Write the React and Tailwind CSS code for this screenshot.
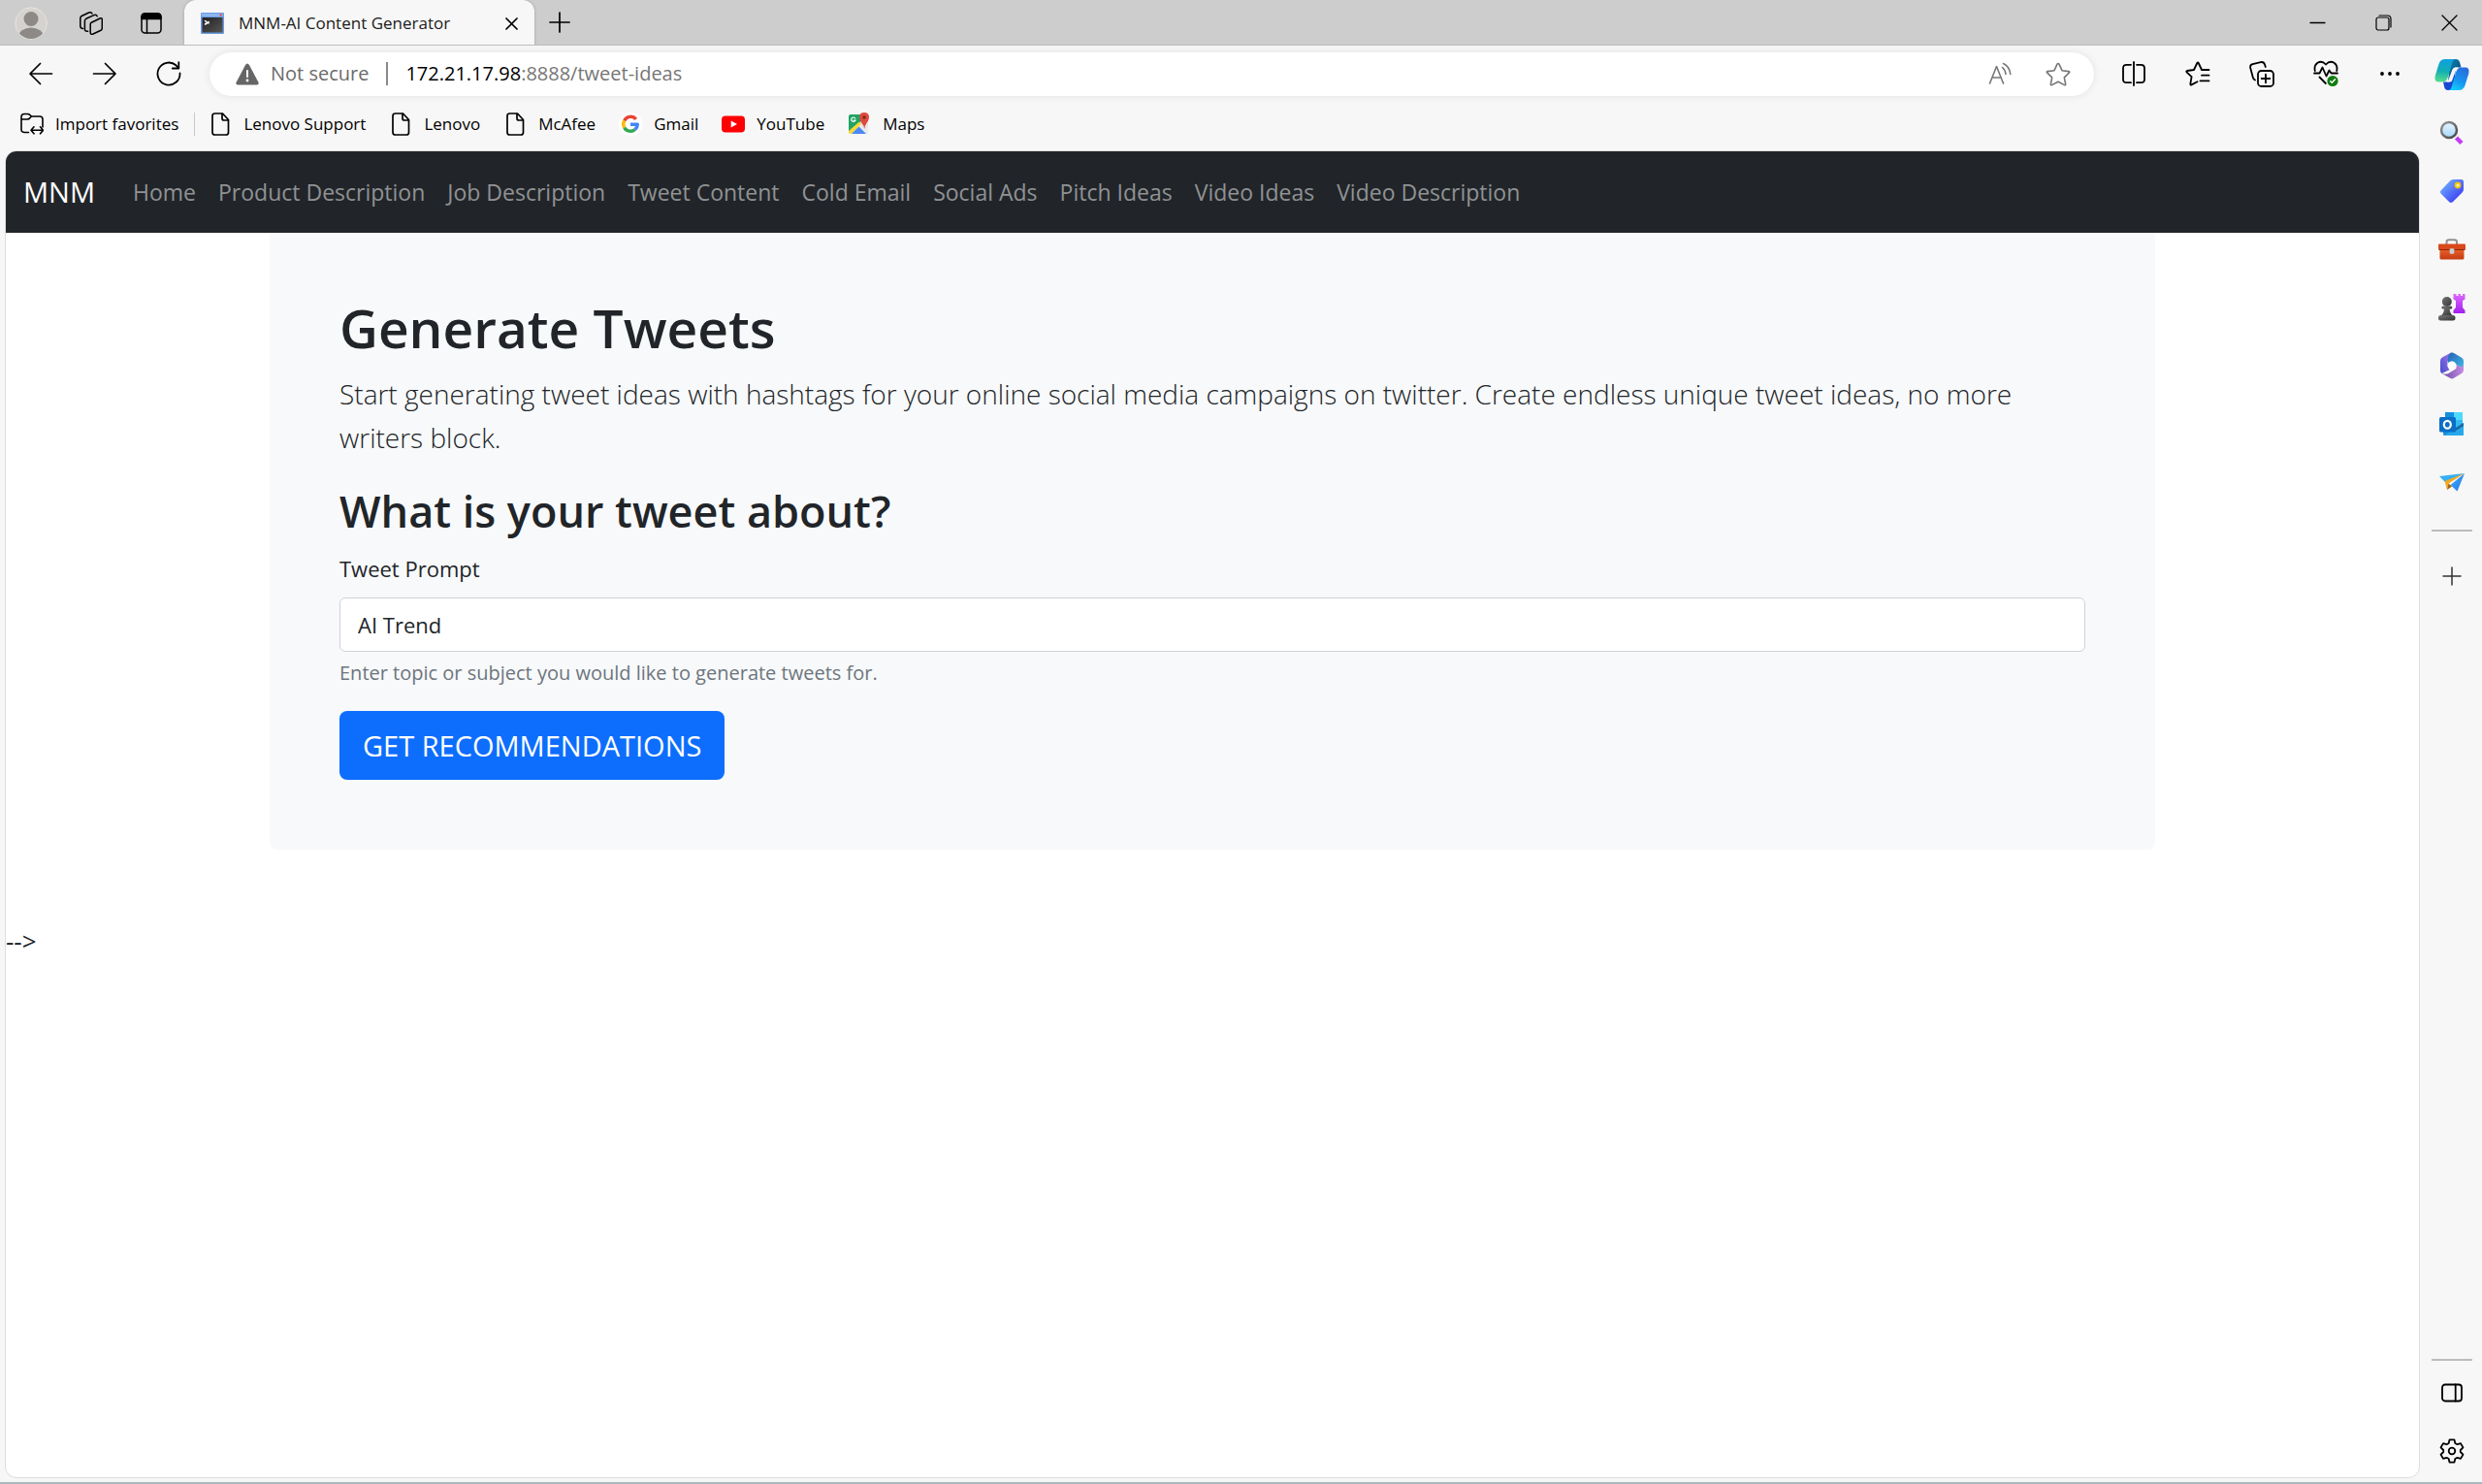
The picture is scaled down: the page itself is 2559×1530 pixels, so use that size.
import React from "react";

function Svg({ size = 24, w, h, sw = 1.5, children, className = "" }) {
  const width = w || size;
  const height = h || size;
  return (
    <svg
      width={width}
      height={height}
      viewBox={`0 0 ${width} ${height}`}
      fill="none"
      stroke="currentColor"
      strokeWidth={sw}
      strokeLinecap="round"
      strokeLinejoin="round"
      className={`shrink-0 ${className}`}
      aria-hidden="true"
    >
      {children}
    </svg>
  );
}

const Avatar = () => (
  <Svg size={34} sw={1}>
    <defs><clipPath id="av"><circle cx="17" cy="17" r="16" /></clipPath></defs>
    <circle cx="17" cy="17" r="16.2" fill="#d5d3cf" stroke="#e6e4e0" />
    <g clipPath="url(#av)" fill="#8c8986" stroke="none">
      <circle cx="17" cy="12.5" r="7.5" />
      <ellipse cx="17" cy="31" rx="13" ry="9.5" />
    </g>
  </Svg>
);
const Workspaces = () => (
  <Svg>
    <path d="M12.3 11.2 L21 7 Q23.3 6.2 23.3 8.5 V17 Q23.3 18.6 22 19.3 L14 23 Q11.2 24 11.2 21.5 V13 Q11.2 11.8 12.3 11.2Z" />
    <path d="M8.7 20.2 Q5.4 20.8 5.4 18 V9.4 Q5.4 8 6.8 7.3 L14.8 3.6 Q17.3 2.7 18.2 4.7" />
    <path d="M3.6 17.5 Q.8 17.5 .8 14.8 V6.8 Q.8 5.2 2.2 4.5 L9.6 1 Q12.2 .2 13 2" />
  </Svg>
);
const VerticalTabs = () => (
  <Svg w={22} h={22}>
    <rect x="1" y="1" width="20" height="20" rx="3.5" />
    <path d="M1 6.5 V4.500 Q1 1 4.500 1 H17.500 Q21 1 21 4.500 V6.500Z" fill="currentColor" />
    <path d="M6.500 6 V21" />
  </Svg>
);
const TerminalIcon = () => (
  <Svg w={24} h={22}>
    <defs><linearGradient id="tm" x1="0" y1="0" x2="1" y2="1"><stop stopColor="#222" /><stop offset="1" stopColor="#555" /></linearGradient></defs>
    <rect width="24" height="22" rx="1" fill="#6b9be0" stroke="none" />
    <rect x="1" y="1" width="22" height="3" fill="#8db6ee" stroke="none" />
    <rect x="19.500" y="1.500" width="2.500" height="2" fill="#e0574f" stroke="none" />
    <rect x="1.500" y="5" width="21" height="15.500" fill="url(#tm)" stroke="none" />
    <path d="M4.500 8.500 L7 10.500 L4.500 12" stroke="#fff" />
    <path d="M8 9.500 V11" stroke="#fff" />
  </Svg>
);
const X = ({ s = 13, sw = 1.7 }) => (
  <Svg size={s} sw={sw}><path d={`M1 1 L${s - 1} ${s - 1} M${s - 1} 1 L1 ${s - 1}`} /></Svg>
);
const Plus = ({ s = 22, sw = 1.7 }) => (
  <Svg size={s} sw={sw}><path d={`M${s / 2} 1 V${s - 1} M1 ${s / 2} H${s - 1}`} /></Svg>
);
const Back = () => <Svg size={26} sw={1.7}><path d="M12.500 2.500 L2 13 L12.500 23.500 M2.500 13 H24.500" /></Svg>;
const Forward = () => <Svg size={26} sw={1.7}><path d="M13.500 2.500 L24 13 L13.500 23.500 M23.500 13 H1.500" /></Svg>;
const Refresh = () => (
  <Svg size={26} sw={1.8}><path d="M24.500 12.500 A11.500 11.500 0 1 1 20.500 4.300 L23 7 M23.300 1.200 V7.500 H16.800" /></Svg>
);
const Warning = () => (
  <Svg w={24} h={23}>
    <path d="M10 2 Q12 -1 14 2 L23.500 20 Q24.300 22.500 21.800 22.500 H2.200 Q-.3 22.500 .5 20Z" fill="#666" stroke="none" />
    <path d="M12 8 V14" stroke="#fff" strokeWidth="2" />
    <circle cx="12" cy="18" r="1.400" fill="#fff" stroke="none" />
  </Svg>
);
const ReadAloud = () => (
  <Svg w={24} h={24} sw={1.6}>
    <path d="M1.500 22 L8.500 4.500 L15.500 22 M4 16 H13" />
    <path d="M14.500 5.500 Q17.500 8 18 12.500 M15.500 1.500 Q22 4.500 22.800 12.500" />
  </Svg>
);
const Star = () => (
  <Svg w={26} h={25} sw={1.6}>
    <path d="M13 1.500 Q13.700 1.500 14 2.200 L17 8.700 L24 9.600 Q25.200 9.900 24.400 10.900 L19.300 15.800 L20.700 22.800 Q20.700 24.200 19.500 23.600 L13 20.200 L6.500 23.600 Q5.300 24.200 5.300 22.800 L6.700 15.800 L1.600 10.900 Q.8 9.900 2 9.600 L9 8.700 L12 2.200 Q12.300 1.500 13 1.500Z" />
  </Svg>
);
const Split = () => (
  <Svg w={24} h={26} sw={1.8}>
    <path d="M9 3.800 H4.500 Q1 3.800 1 7.300 V18.700 Q1 22.200 4.500 22.200 H9 M15 3.800 H19.500 Q23 3.800 23 7.300 V18.700 Q23 22.200 19.500 22.200 H15 M12 1 V25" />
  </Svg>
);
const Favorites = () => (
  <Svg w={26} h={26} sw={1.8}>
    <path d="M24.500 9 H17 L13.700 2 Q13 .8 12.300 2 L9 9 L1.900 10 Q.7 10.300 1.500 11.300 L6.600 16.200 L5.300 23.600 Q5.300 25 6.500 24.400 L12.500 21.200" />
    <path d="M17 14.700 H24.500 M15.500 20.400 H24.500" />
  </Svg>
);
const Collections = () => (
  <Svg w={26} h={27} sw={1.8}>
    <rect x="9" y="10" width="16" height="16" rx="3.500" />
    <path d="M17 13.700 V22.300 M12.700 18 H21.300" />
    <path d="M6 19.500 Q4.200 18.700 3.800 16.800 L1.200 7 Q.6 4 3.500 3.200 L11.800 1.100 Q15 .4 16 3.500 L16.800 6" />
  </Svg>
);
const Health = () => (
  <Svg w={26} h={28} sw={1.8}>
    <path d="M1.800 11 Q.5 5.500 4.500 2.700 Q9 .2 13 4.500 Q17 .2 21.500 2.700 Q25.500 5.500 24.200 11 M1 13.500 H6.500 L9.500 7.500 L13.500 16.500 L16.500 10.500 L18.500 13.500 H25 M6.500 17.500 L12.800 24" />
    <circle cx="20" cy="21.500" r="5.600" fill="#107c10" stroke="none" />
    <path d="M17.700 21.700 L19.300 23.200 L22.500 19.700" stroke="#fff" strokeWidth="1.400" />
  </Svg>
);
const Dots = () => (
  <Svg w={22} h={6}><g fill="currentColor" stroke="none"><circle cx="3" cy="3" r="1.900" /><circle cx="11" cy="3" r="1.900" /><circle cx="19" cy="3" r="1.900" /></g></Svg>
);
const Copilot = () => (
  <Svg w={36} h={34}>
    <defs>
      <linearGradient id="c1" x1=".3" y1="0" x2=".2" y2="1"><stop stopColor="#0fa0e0" /><stop offset=".5" stopColor="#12aeb5" /><stop offset="1" stopColor="#5ade8b" /></linearGradient>
      <linearGradient id="c2" x1=".9" y1="0" x2=".4" y2="1"><stop stopColor="#2a67d8" /><stop offset=".6" stopColor="#1793ef" /><stop offset="1" stopColor="#14c8fa" /></linearGradient>
      <linearGradient id="c3" x1="0" y1="0" x2="1" y2="1"><stop stopColor="#0a83b5" /><stop offset="1" stopColor="#06456f" /></linearGradient>
    </defs>
    <g stroke="none">
      <path d="M17 1 H22 Q25 1 26 4 L27.500 9.500 H22 Q19 9.500 18 13 L14 24 L16 4Z" fill="url(#c3)" />
      <path d="M19 33 H14 Q11 33 10.200 30 L9 24.500 H14.500 Q17 24.500 18 21 L22 10 L20 30Z" fill="#1748d2" />
      <path d="M11 1 H22 Q19.500 1 18.500 4 L14 19 Q12.500 24.500 8.500 24.500 H4 Q-.5 24.500 .8 18 L4.500 6 Q6 1 11 1Z" fill="url(#c1)" />
      <path d="M25 33 H14 Q16.500 33 17.500 30 L22 15 Q23.500 9.500 27.500 9.500 H32 Q36.500 9.500 35.200 16 L31.500 28 Q30 33 25 33Z" fill="url(#c2)" />
      <path d="M18.500 12.500 Q19.500 9.500 22 9.500 H24 Q22.500 10.500 21.800 13 L18 23.500 Q17.500 24.500 15.500 24.500 H13 Q14.300 23.500 15 21.500Z" fill="#f7f7f7" />
    </g>
  </Svg>
);
const Search = () => (
  <Svg w={26} h={26}>
    <defs><linearGradient id="s1" x1="0" y1="0" x2="0" y2="1"><stop stopColor="#e9f5ff" /><stop offset="1" stopColor="#a5d8fb" /></linearGradient>
      <linearGradient id="s2" x1="0" y1="0" x2="1" y2="1"><stop stopColor="#999" /><stop offset="1" stopColor="#444" /></linearGradient></defs>
    <path d="M17.500 18 L23 23.500" stroke="#c23cf5" strokeWidth="4.500" strokeLinecap="butt" />
    <circle cx="10" cy="10" r="8" fill="url(#s1)" stroke="url(#s2)" strokeWidth="2.500" />
  </Svg>
);
const Tag = () => (
  <Svg w={26} h={26}>
    <defs><linearGradient id="t1" x1="0" y1="0" x2="1" y2="1"><stop offset=".1" stopColor="#6fb0ff" /><stop offset=".9" stopColor="#3a35f2" /></linearGradient></defs>
    <path d="M14 1 H22.500 Q25 1 25 3.500 V11 Q25 13 23.500 14.500 L14 24 Q12 26 10 24 L2 16 Q0 14 2 12 L11 2.500 Q12.500 1 14 1Z" fill="url(#t1)" stroke="none" />
    <circle cx="19" cy="7" r="2.500" fill="#fff3b0" stroke="#f2c200" strokeWidth="1.800" />
  </Svg>
);
const Toolbox = () => (
  <Svg w={28} h={22}>
    <defs><linearGradient id="b1" x1="0" y1="0" x2="0" y2="1"><stop stopColor="#f0692e" /><stop offset="1" stopColor="#c43b12" /></linearGradient></defs>
    <path d="M8.500 6 V3.500 Q8.500 1.200 11 1.200 H16.500 Q19 1.200 19 3.500 V6" stroke="#909090" strokeWidth="2" />
    <rect x="1.500" y="9" width="25" height="12.500" rx="1.500" fill="url(#b1)" stroke="none" />
    <rect x="0" y="5.500" width="28" height="6" rx="1" fill="#d9491b" stroke="none" />
    <path d="M1 11.500 H27" stroke="#8e260a" strokeWidth="1" />
    <rect x="11.700" y="10.200" width="4.600" height="5.500" rx="1" fill="#c9ced2" stroke="none" />
  </Svg>
);
const Chess = () => (
  <Svg w={28} h={28}>
    <defs><linearGradient id="p1" x1="0" y1="0" x2="0" y2="1"><stop stopColor="#dd6bfa" /><stop offset="1" stopColor="#a31ef0" /></linearGradient>
      <linearGradient id="p2" x1="0" y1="0" x2="1" y2="1"><stop stopColor="#777" /><stop offset="1" stopColor="#333" /></linearGradient></defs>
    <g stroke="none">
      <path d="M15.500 0 H18.500 V2 H20.500 V0 H23 V2 H25 V0 H27.500 V5.500 L25 7 V14 L27.500 17 V20 H15.500 V17 L18 14 V7 L15.500 5.500Z" fill="url(#p1)" />
      <g fill="url(#p2)">
        <circle cx="8.800" cy="8" r="5" />
        <rect x="3.300" y="12.500" width="11" height="3" rx="1.500" />
        <path d="M6 14 H11.600 Q11.600 20 14.500 22 H3 Q6 20 6 14Z" />
        <rect x="0" y="22" width="17.500" height="5.500" rx="2.500" />
      </g>
    </g>
  </Svg>
);
const M365 = () => (
  <Svg w={26} h={28}>
    <defs>
      <linearGradient id="m1" x1="0" y1="1" x2="1" y2="0"><stop stopColor="#4b4bd0" /><stop offset="1" stopColor="#a27be8" /></linearGradient>
      <linearGradient id="m2" x1="0" y1="0" x2="1" y2="1"><stop stopColor="#2560b4" /><stop offset="1" stopColor="#3fbce8" /></linearGradient>
      <linearGradient id="m3" x1="0" y1="0" x2="1" y2="0"><stop stopColor="#6a4aa8" /><stop offset="1" stopColor="#c58be0" /></linearGradient>
    </defs>
    <g stroke="none">
      <path d="M13 0 L3 5.500 Q1 6.700 1 9 V19 Q1 21 2.500 22 L11 18 L8.500 14 V10Z" fill="url(#m1)" />
      <path d="M11.500 1 Q13 0 15 1 L23 5.800 Q25 7 25 9 V17 L17.500 13 L13 9.500 L9 11 V6 Q9 2.500 11.500 1Z" fill="url(#m2)" />
      <path d="M25 11 V18.500 Q25 20.700 23 22 L15 26.800 Q13 28 11 26.800 L2.500 22 Q8 24 11 21 L17.500 17 V13 L22 15.500 Q25 15 25 11Z" fill="url(#m3)" />
      <circle cx="13" cy="14" r="4.500" fill="#fff" />
    </g>
  </Svg>
);
const Outlook = () => (
  <Svg w={26} h={26}>
    <g stroke="none">
      <rect x="6" y="1" width="18" height="16" rx="1.500" fill="#35b8f1" />
      <rect x="6" y="1" width="9" height="8" fill="#1490df" />
      <rect x="15" y="1" width="9" height="8" fill="#50d9ff" />
      <path d="M4 12 L15 18 L25 12 V23.500 Q25 25 23.500 25 H5.500 Q4 25 4 23.500Z" fill="#1a8fdc" />
      <path d="M25 12 L6 24.500 Q6.500 25 8 25 H23.500 Q25 25 25 23.500Z" fill="#28a8ea" />
      <path d="M25 12 L15 18.500 L17.500 19.800 L25 15Z" fill="#123b6d" opacity=".6" />
      <rect x="0" y="6" width="17" height="15.500" rx="1.500" fill="#0a6fc7" />
    </g>
    <ellipse cx="8.300" cy="13.700" rx="3.500" ry="3.900" stroke="#fff" strokeWidth="2.200" />
  </Svg>
);
const Plane = () => (
  <Svg w={26} h={20}>
    <defs><linearGradient id="f1" x1="0" y1="0" x2="1" y2="1"><stop stopColor="#38b6f5" /><stop offset="1" stopColor="#2a6df0" /></linearGradient></defs>
    <g stroke="none">
      <path d="M0 4 L26 1 L6 10Z" fill="#35b0f3" />
      <path d="M26 1 L11.500 13 L18.500 19.500Z" fill="url(#f1)" />
      <path d="M26 1 L5.500 9 L8 18 L9.500 11.500Z" fill="#f5a81c" />
      <path d="M8 18 L9.500 11.500 L13 14.500Z" fill="#a8620a" />
    </g>
  </Svg>
);
const Panel = () => (
  <Svg w={22} h={20} sw={1.8}><rect x="1" y="1.500" width="20" height="17" rx="3" /><path d="M14.700 1.500 V18.500" /></Svg>
);
const Gear = () => (
  <Svg w={26} h={26} sw={1.8}>
    <path d="M10.500 1.400 H15.500 L16.300 5 L18.500 6.200 L22 5.100 L24.500 9.400 L21.800 12 V14 L24.500 16.600 L22 20.900 L18.500 19.800 L16.300 21 L15.500 24.600 H10.500 L9.700 21 L7.500 19.800 L4 20.900 L1.500 16.600 L4.200 14 V12 L1.500 9.400 L4 5.100 L7.500 6.200 L9.700 5Z" />
    <circle cx="13" cy="13" r="3.300" />
  </Svg>
);
const ImportFolder = () => (
  <Svg w={24} h={24} sw={1.6}>
    <path d="M8.500 20.500 H4.500 Q1 20.500 1 17.500 V4.500 Q1 1.500 4 1.500 H7.500 Q9 1.500 10 2.700 L11.500 4 H20 Q23 4 23 7 V15 M1 7 H7 Q9 7 10 5.500 L11.500 4" />
    <path d="M14 14.800 L11 18.300 L14 21.800 M20.500 14.800 L23.500 18.300 L20.500 21.800 M11.500 18.300 H23" />
  </Svg>
);
const FileIcon = () => (
  <Svg w={24} h={24} sw={1.7}>
    <path d="M6.500 1 H14.500 L20.500 7.500 V20.500 Q20.500 23 18 23 H6.500 Q4 23 4 20.500 V3.500 Q4 1 6.500 1Z M14 1.500 V6 Q14 8 16 8 H20" />
  </Svg>
);
const Google = () => (
  <Svg w={24} h={24}>
    <circle cx="12" cy="12" r="12" fill="#fff" stroke="none" />
    <g strokeWidth="3.400" strokeLinecap="butt">
      <path d="M17.800 6.800 A7.300 7.300 0 0 0 5.700 8.400" stroke="#ea4335" />
      <path d="M5.700 8.400 A7.300 7.300 0 0 0 5.700 15.600" stroke="#fbbc05" />
      <path d="M5.700 15.600 A7.300 7.300 0 0 0 16.800 17.500" stroke="#34a853" />
      <path d="M16.800 17.500 A7.300 7.300 0 0 0 19.300 12.200 H12" stroke="#4285f4" />
    </g>
  </Svg>
);
const YouTube = () => (
  <Svg w={24} h={24}>
    <rect x="0" y="3.500" width="24" height="17" rx="4" fill="#f00" stroke="none" />
    <path d="M9.700 8.500 L16 12 L9.700 15.500Z" fill="#fff" stroke="none" />
  </Svg>
);
const Maps = () => (
  <Svg w={24} h={24}>
    <g stroke="none">
      <path d="M1 4 Q1 2 3 2 H21 V20 Q21 22 19 22 H3 Q1 22 1 20Z" fill="#e8eaed" />
      <path d="M1 4 Q1 2 3 2 H17 L12 12 L1 21Z" fill="#1fa463" />
      <path d="M1 19 L12 9.500 L14 11.500 L4 22 H3 Q1 22 1 20Z" fill="#fdd835" />
      <path d="M4 22 L11.500 14.500 L19 22Z" fill="#4a8af4" />
      <path d="M17 0 Q22 0 22 5 Q22 8 19.500 11 Q18 13 17.200 17 Q16.500 13 14.500 11 Q12 8 12 5 Q12 0 17 0Z" fill="#dd4b3e" />
      <circle cx="17" cy="5" r="1.800" fill="#7d2a22" />
    </g>
    <path d="M7.800 6 A2.200 2.200 0 1 0 8 8 H6.300" stroke="#fff" strokeWidth="1.200" />
  </Svg>
);

const bookmarks = [
  ["Lenovo Support", FileIcon],
  ["Lenovo", FileIcon],
  ["McAfee", FileIcon],
  ["Gmail", Google],
  ["YouTube", YouTube],
  ["Maps", Maps],
];
const links = ["Home", "Product Description", "Job Description", "Tweet Content", "Cold Email", "Social Ads", "Pitch Ideas", "Video Ideas", "Video Description"];
const tools = [
  ["Split screen", Split],
  ["Favorites", Favorites],
  ["Collections", Collections],
  ["Browser essentials", Health],
  ["Settings and more", Dots],
];
const apps = [
  ["Copilot", Copilot],
  ["Search", Search],
  ["Shopping", Tag],
  ["Tools", Toolbox],
  ["Games", Chess],
  ["Microsoft 365", M365],
  ["Outlook", Outlook],
  ["Drop", Plane],
];

function IconButton({ label, className, children }) {
  return (
    <button type="button" aria-label={label} className={`flex shrink-0 items-center justify-center ${className}`}>
      {children}
    </button>
  );
}

function TitleBar() {
  return (
    <header className="relative flex h-[47px] shrink-0 items-stretch overflow-hidden border-b border-[#bdbdbd] bg-[#cdcdcd]">
      <div className="absolute left-1/2 top-0 h-0 w-80 -translate-x-1/2 shadow-[0_0_12px_rgba(0,0,0,0.08)]" />
      <div className="flex w-[190px] items-center pt-px">
        <IconButton label="Profile" className="w-16"><Avatar /></IconButton>
        <IconButton label="Workspaces" className="w-15"><Workspaces /></IconButton>
        <IconButton label="Tab actions" className="w-16"><VerticalTabs /></IconButton>
      </div>
      <div className="-mb-px flex w-[361px] items-center rounded-t-xl bg-[#f7f7f7] pl-[17px] pr-2 pt-px shadow-[0_0_3px_rgba(0,0,0,0.25)]">
        <TerminalIcon />
        <span className="ml-[15px] flex-1 whitespace-nowrap text-[17px] leading-6 text-[#1b1b1b]">MNM-AI Content Generator</span>
        <IconButton label="Close tab" className="size-8"><X /></IconButton>
      </div>
      <IconButton label="New tab" className="w-[52px]"><Plus /></IconButton>
      <div className="ml-auto flex">
        <IconButton label="Minimize" className="w-17"><Svg w={17} h={3} sw={1.4}><path d="M1 1.500 H16" /></Svg></IconButton>
        <IconButton label="Restore" className="w-17">
          <Svg w={17} h={17} sw={1.2}>
            <rect x="1" y="3" width="13" height="13" rx="2" />
            <path d="M4 1 H12.500 Q16 1 16 4.500 V13" />
          </Svg>
        </IconButton>
        <IconButton label="Close window" className="w-17"><X s={17} sw={1.3} /></IconButton>
      </div>
    </header>
  );
}

function Toolbar() {
  return (
    <div className="flex h-[58px] shrink-0 items-center">
      <div className="flex w-[216px] pl-[9px]">
        <IconButton label="Back" className="w-[66px]"><Back /></IconButton>
        <IconButton label="Forward" className="w-[66px]"><Forward /></IconButton>
        <IconButton label="Refresh" className="w-[66px]"><Refresh /></IconButton>
      </div>
      <div className="flex h-[45px] flex-1 items-center rounded-full bg-white pl-[27px] pr-[7px] text-[20px] leading-7 shadow-[0_0_8px_rgba(0,0,0,0.09)]">
        <Warning />
        <span className="ml-3 whitespace-nowrap text-[#6b6b6b]">Not secure</span>
        <span className="mx-[18px] h-6 w-0.5 bg-[#8a8a8a]" />
        <div role="textbox" aria-label="Address" className="flex-1 whitespace-nowrap text-[#767676]">
          <span className="text-black">172.21.17.98</span>:8888/tweet-ideas
        </div>
        <IconButton label="Read aloud" className="w-15 text-[#767676]"><ReadAloud /></IconButton>
        <IconButton label="Add to favorites" className="w-15 text-[#767676]"><Star /></IconButton>
      </div>
      <div className="-mr-0.5 flex pl-2">
        {tools.map(([label, Icon]) => (
          <IconButton key={label} label={label} className="h-10 w-[66px]"><Icon /></IconButton>
        ))}
      </div>
    </div>
  );
}

function Bookmarks() {
  return (
    <nav aria-label="Favorites bar" className="flex h-[50px] shrink-0 items-center gap-6 pb-1 pl-[21px] text-[17px] leading-6 text-black">
      <div className="flex items-center">
        <button type="button" className="flex items-center gap-3 whitespace-nowrap"><ImportFolder />Import favorites</button>
        <span className="-mr-[10px] ml-4 h-6 w-px bg-[#c8c8c8]" />
      </div>
      {bookmarks.map(([label, Icon]) => (
        <a key={label} href="#" className="flex items-center gap-3 whitespace-nowrap"><Icon />{label}</a>
      ))}
    </nav>
  );
}

function Sidebar() {
  return (
    <aside className="flex w-16 shrink-0 flex-col items-center pb-0.5 pl-0.5">
      {apps.map(([label, Icon]) => (
        <IconButton key={label} label={label} className="h-15 w-full"><Icon /></IconButton>
      ))}
      <hr className="mb-4 mt-[19px] h-0.5 w-[42px] border-0 bg-[#bcbcbc]" />
      <IconButton label="Customize" className="h-15 w-full text-[#333]"><Plus s={20} sw={1.5} /></IconButton>
      <hr className="mb-[3px] mt-auto h-0.5 w-[42px] border-0 bg-[#bcbcbc]" />
      <IconButton label="Toggle sidebar" className="h-15 w-full"><Panel /></IconButton>
      <IconButton label="Settings" className="h-15 w-full"><Gear /></IconButton>
    </aside>
  );
}

function Page() {
  return (
    <div className="mb-1 ml-[5px] flex flex-1 flex-col overflow-hidden rounded-xl border border-[#dedede] bg-white text-[#212529]">
      <nav aria-label="Main" className="flex h-[84px] shrink-0 items-center gap-[39px] bg-[#212529] pl-[18px]">
        <a href="#" className="text-[29px] leading-10 text-white">MNM</a>
        <div className="flex gap-[23px] text-[23px] leading-9 text-[#909294]">
          {links.map((l) => (
            <a key={l} href="#" className="whitespace-nowrap">{l}</a>
          ))}
        </div>
      </nav>
      <main className="mx-auto w-full max-w-[1944px] rounded-b-lg bg-[#f8f9fa] px-18 pb-18 pt-16">
        <h1 className="text-[55px] font-semibold leading-[68px]">Generate Tweets</h1>
        <p className="mb-6 mt-3 text-[28px] font-light leading-[45px]">
          Start generating tweet ideas with hashtags for your online social media campaigns on twitter. Create endless unique tweet ideas, no more writers block.
        </p>
        <h2 className="mb-3 text-[45px] font-semibold leading-[58px]">What is your tweet about?</h2>
        <form onSubmit={(e) => e.preventDefault()}>
          <label htmlFor="prompt" className="mb-3 block text-[22px] leading-9">Tweet Prompt</label>
          <input
            id="prompt"
            type="text"
            defaultValue="AI Trend"
            aria-describedby="prompt-help"
            className="block h-14 w-full rounded-md border border-[#ced4da] bg-white px-[18px] text-[22px] leading-9 outline-none"
          />
          <div id="prompt-help" className="mb-6 mt-1.5 text-[20px] leading-[31px] text-[#6c757d]">Enter topic or subject you would like to generate tweets for.</div>
          <button type="submit" className="block rounded-lg bg-[#0d6efd] px-6 py-3 text-[29px] leading-[47px] text-white">GET RECOMMENDATIONS</button>
        </form>
      </main>
      <p className="mt-19 text-[26px] leading-9">--&gt;</p>
    </div>
  );
}

export default function App() {
  return (
    <div className="flex h-screen flex-col border-b-2 border-[#a9b8bc] bg-[#f7f7f7] font-['Open_Sans',sans-serif] text-black">
      <TitleBar />
      <div className="flex min-h-0 flex-1">
        <div className="flex min-w-0 flex-1 flex-col">
          <Toolbar />
          <Bookmarks />
          <Page />
        </div>
        <Sidebar />
      </div>
    </div>
  );
}
